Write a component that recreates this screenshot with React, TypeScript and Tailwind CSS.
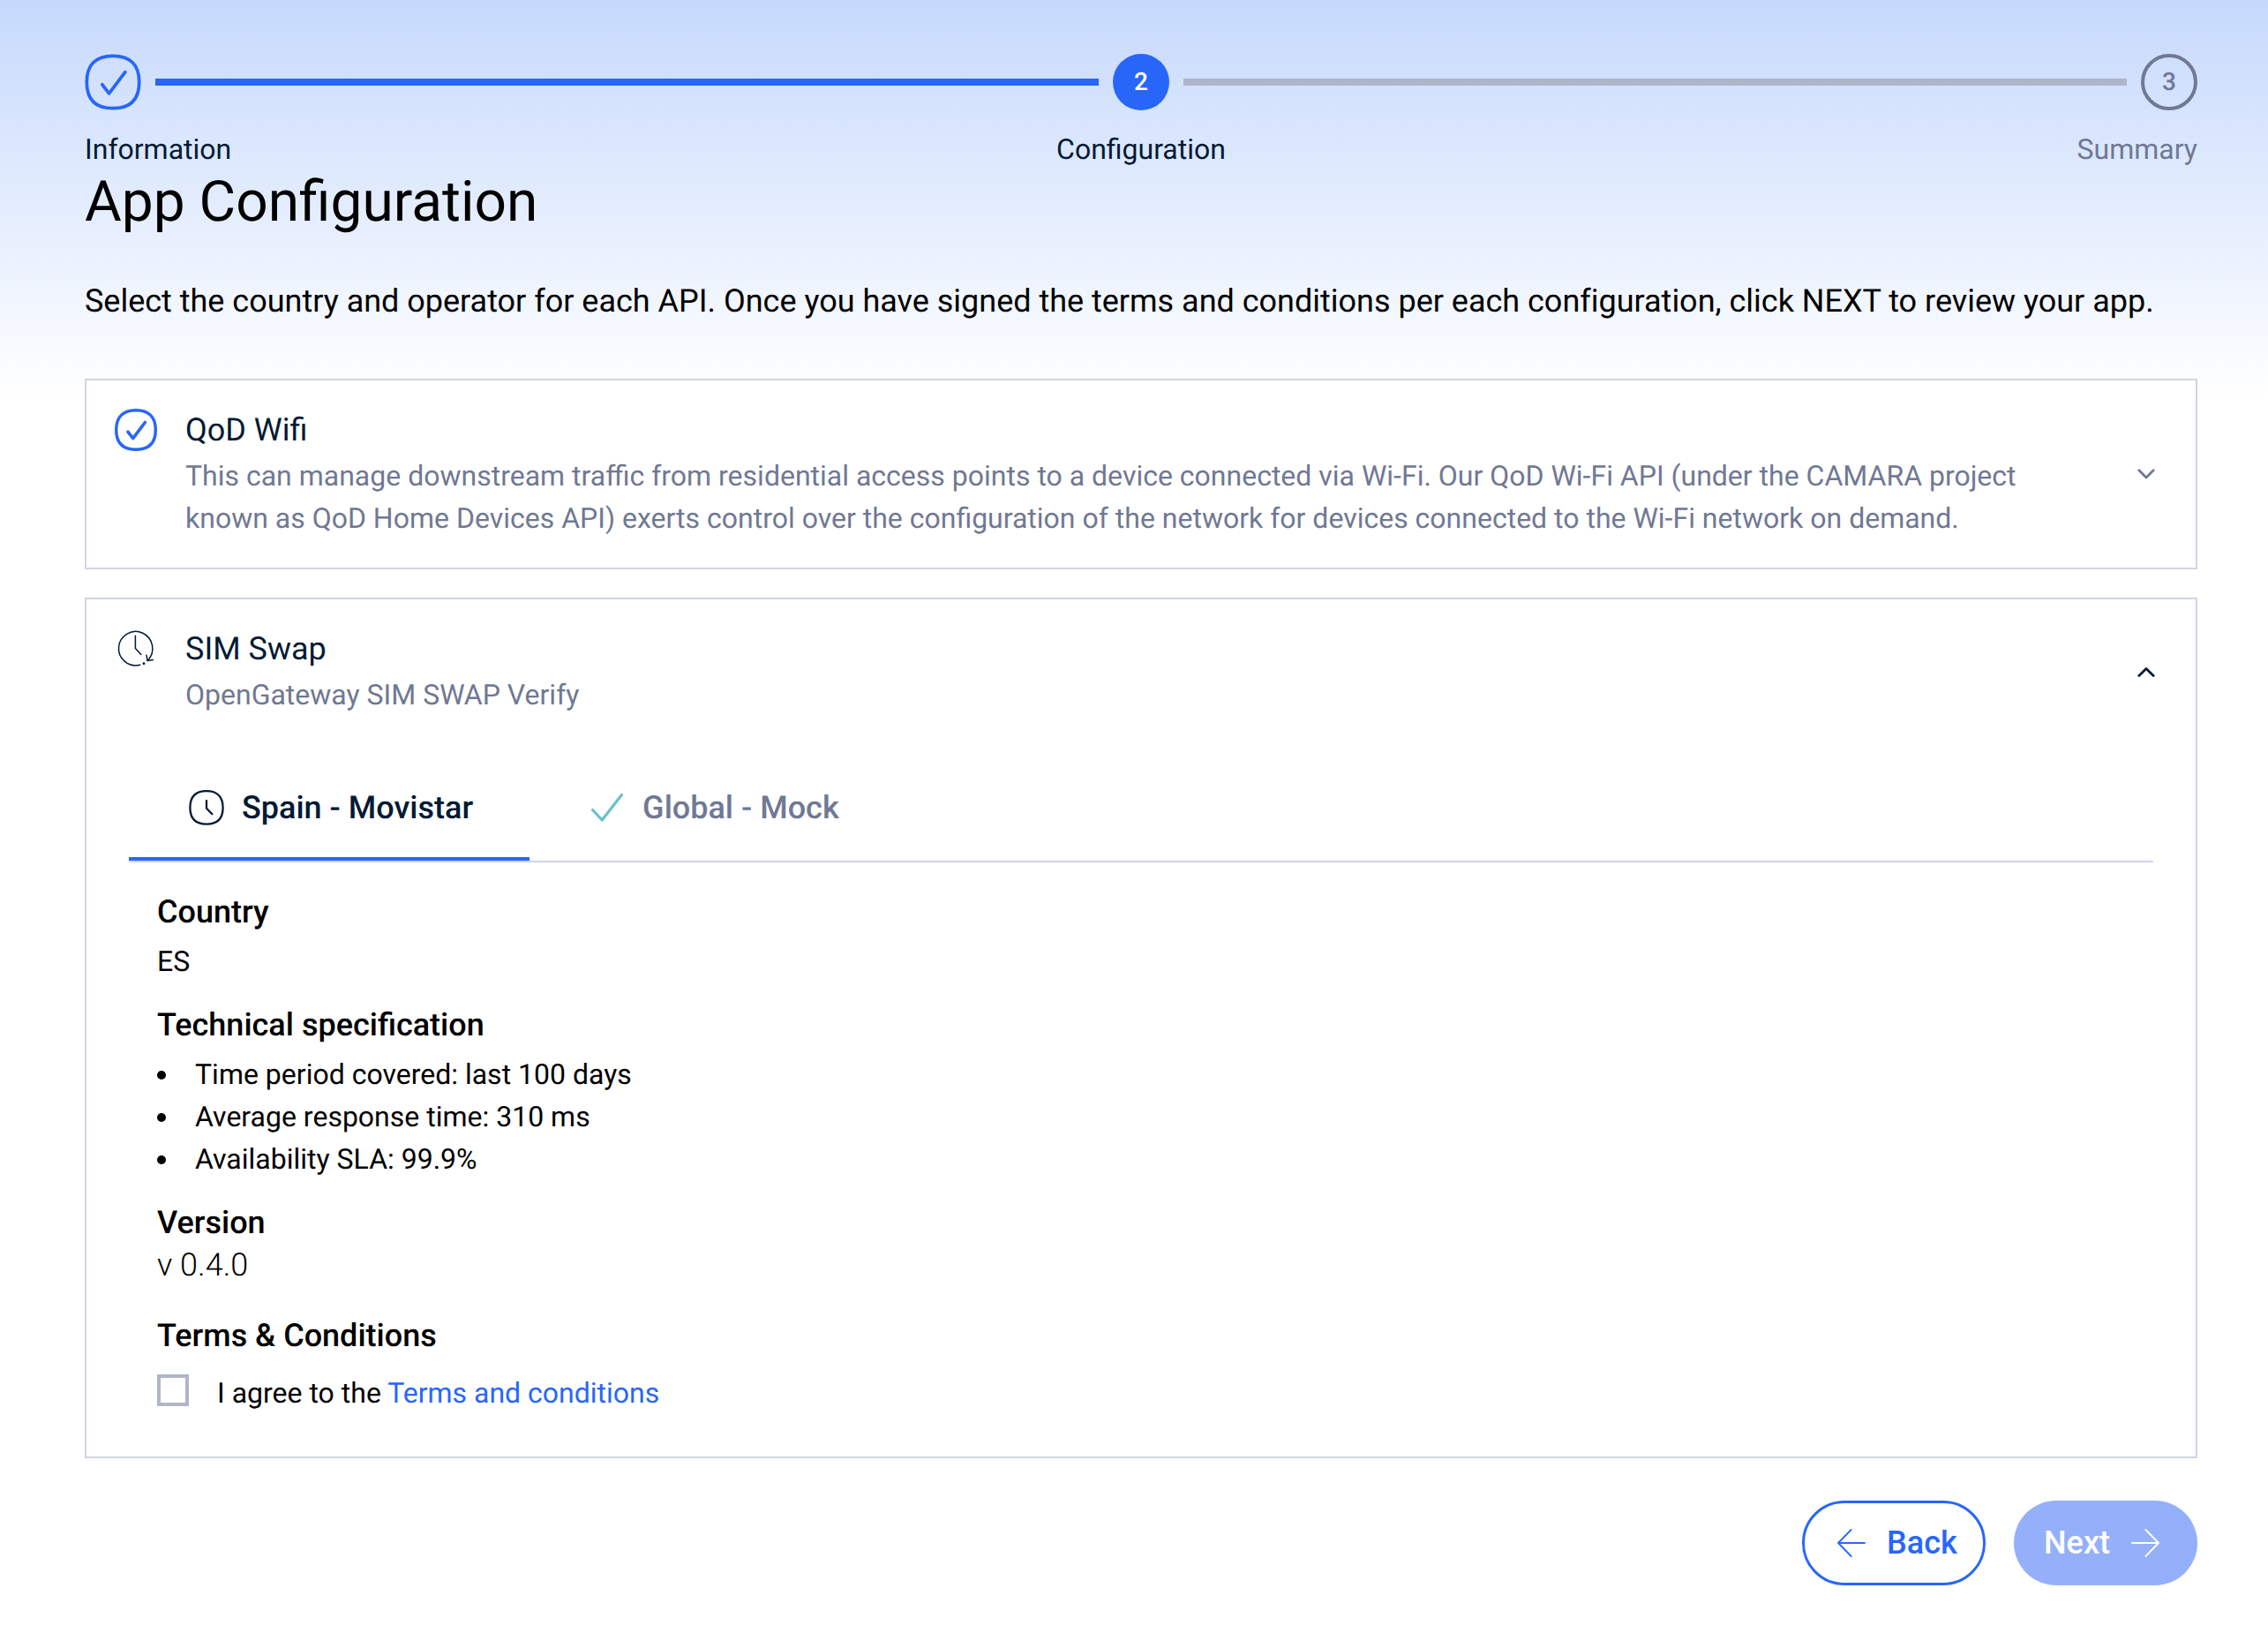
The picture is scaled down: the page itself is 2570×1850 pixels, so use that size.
import type { ReactNode } from "react";

function CheckBadge({ className, ring, tick }: { className: string; ring: number; tick: number }) {
  return (
    <svg viewBox="0 0 48 48" className={className} fill="none" stroke="currentColor" strokeLinecap="round" strokeLinejoin="round">
      <path d="M24 1.7C9.3 1.7 1.7 9.3 1.7 24S9.3 46.3 24 46.3 46.3 38.7 46.3 24 38.7 1.7 24 1.7Z" strokeWidth={ring} />
      <path d="M14.9 26.1 20.7 33.6 34.4 15.5" strokeWidth={tick} />
    </svg>
  );
}

function HistoryIcon() {
  return (
    <svg viewBox="0 0 48 48" className="size-12 shrink-0" fill="none" stroke="currentColor" strokeWidth="1.5" strokeLinecap="round" strokeLinejoin="round">
      <path d="M28.7 42.2A19.2 19.2 0 1 1 37.3 37.2" />
      <path d="M23.4 9.2V23.5L29.8 30.5" />
      <path d="M36 31.2 37.1 37.6 43.4 36.4" />
      <circle cx="33" cy="40.7" r="0.7" fill="currentColor" />
    </svg>
  );
}

function ClockIcon() {
  return (
    <svg viewBox="0 0 48 48" className="size-12 shrink-0" fill="none" stroke="currentColor" strokeWidth="2.3" strokeLinecap="round" strokeLinejoin="round">
      <path d="M24 5.2C11.7 5.2 5.4 11.6 5.4 24S11.7 42.6 24 42.6 42.6 36.3 42.6 24 36.3 5.2 24 5.2Z" />
      <path d="M24 16.2V24.7L30.4 31.2" />
    </svg>
  );
}

function TickIcon() {
  return (
    <svg viewBox="0 0 48 48" className="size-12 shrink-0 text-[#6bc1c8]" fill="none" stroke="currentColor" strokeWidth="3.2" strokeLinecap="round" strokeLinejoin="round">
      <path d="M7.5 26.5 18.2 38 40.5 9.5" />
    </svg>
  );
}

function Chevron({ up, className }: { up?: boolean; className: string }) {
  return (
    <svg viewBox="0 0 48 48" className={className} fill="none" stroke="currentColor" strokeWidth="2.8" strokeLinecap="round" strokeLinejoin="round">
      <path d={up ? "M15.8 28.6 24 20.4 32.2 28.6" : "M15.8 19.7 24 27.9 32.2 19.7"} />
    </svg>
  );
}

function Arrow({ left }: { left?: boolean }) {
  return (
    <svg viewBox="0 0 32 32" className="size-8 shrink-0" fill="none" stroke="currentColor" strokeWidth="1.8" strokeLinecap="round" strokeLinejoin="round">
      <path d={left ? "M31 16H1M15.6 1 1 16 15.6 31" : "M1 16H31M16.4 1 31 16 16.4 31"} />
    </svg>
  );
}

function CardHeader({ icon, title, text, chevron }: { icon: ReactNode; title: string; text: string; chevron: ReactNode }) {
  return (
    <div className="flex items-center">
      <div className="flex flex-1 items-start gap-8">
        {icon}
        <div className="max-w-[2140px]">
          <h2 className="mb-1 text-[36px] leading-12 text-[#031a34]">{title}</h2>
          <p className="text-[32px] leading-12 text-[#707894]">{text}</p>
        </div>
      </div>
      {chevron}
    </div>
  );
}

const specs = [
  "Time period covered: last 100 days",
  "Average response time: 310 ms",
  "Availability SLA: 99.9%",
];

export default function App() {
  return (
    <div className="min-h-[1850px] bg-white bg-[linear-gradient(180deg,#c6d9fc_0px,#ffffff_450px)] font-['Roboto',sans-serif] text-black [text-rendering:geometricPrecision]">
      <div className="flex flex-col pt-[61px] pr-20 pl-24">
        <div className="flex items-center gap-4">
          <CheckBadge ring={2.8} tick={2.8} className="size-16 shrink-0 text-[#2866fa]" />
          <div className="h-2 flex-1 bg-[#2866fa]" />
          <div className="flex size-16 items-center justify-center rounded-full bg-[#2866fa] text-[28px] font-medium text-white">2</div>
          <div className="h-2 flex-1 bg-[#b0b5c9]" />
          <div className="flex size-16 items-center justify-center rounded-full border-4 border-[#707894] text-[28px] font-medium text-[#707894]">3</div>
        </div>
        <div className="mt-5 grid grid-cols-3 text-[32px] leading-12 text-[#031a34]">
          <span>Information</span>
          <span className="text-center">Configuration</span>
          <span className="text-right text-[#707894]">Summary</span>
        </div>

        <h1 className="text-[64px] leading-[72px]">App Configuration</h1>
        <p className="mt-[52px] text-[36px] leading-12 tracking-[-0.01px] whitespace-nowrap">
          Select the country and operator for each API. Once you have signed the terms and conditions per each configuration, click NEXT to review your app.
        </p>

        <section className="mt-16 border-2 border-[#d1d5e4] bg-white p-8">
          <CardHeader
            icon={<CheckBadge ring={3.4} tick={3.6} className="size-12 shrink-0 text-[#2866fa]" />}
            title="QoD Wifi"
            text="This can manage downstream traffic from residential access points to a device connected via Wi-Fi. Our QoD Wi-Fi API (under the CAMARA project known as QoD Home Devices API) exerts control over the configuration of the network for devices connected to the Wi-Fi network on demand."
            chevron={<Chevron className="size-12 shrink-0 text-[#707894]" />}
          />
        </section>

        <section className="mt-8 border-2 border-[#d1d5e4] bg-white px-8 pt-8 pb-12">
          <CardHeader
            icon={<span className="text-[#031a34]"><HistoryIcon /></span>}
            title="SIM Swap"
            text="OpenGateway SIM SWAP Verify"
            chevron={<Chevron up className="size-12 shrink-0 text-[#031a34]" />}
          />

          <div className="mx-4 mt-11 flex border-b-2 border-[#d1d5e4] text-[36px] leading-12 font-medium">
            <div className="flex h-[120px] items-center gap-4 border-b-4 border-[#2866fa] px-16 pt-1 text-[#031a34]">
              <ClockIcon />
              Spain - Movistar
            </div>
            <div className="flex h-[120px] items-center gap-4 px-16 text-[#707894]">
              <TickIcon />
              Global - Mock
            </div>
          </div>

          <div className="px-12 pt-8 text-[32px] leading-12">
            <h3 className="mb-2 text-[36px] leading-12 font-medium">Country</h3>
            <p>ES</p>
            <h3 className="mt-6 mb-2 text-[36px] leading-12 font-medium">Technical specification</h3>
            <ul>
              {specs.map((s) => (
                <li key={s} className="flex items-center gap-[33px]">
                  <span className="mt-0.5 size-2.5 rounded-full bg-black" />
                  {s}
                </li>
              ))}
            </ul>
            <h3 className="mt-6 text-[36px] leading-12 font-medium">Version</h3>
            <p className="text-[36px] leading-12 font-light">v 0.4.0</p>
            <h3 className="mt-8 text-[36px] leading-12 font-medium">Terms &amp; Conditions</h3>
            <div className="mt-[17px] flex items-start gap-8">
              <span className="mt-[3px] size-9 border-4 border-[#b0b5c9]" />
              <p>
                I agree to the <a className="text-[#2866fa]">Terms and conditions</a>
              </p>
            </div>
          </div>
        </section>

        <div className="mt-12 flex justify-end gap-8 text-[36px] font-medium">
          <button className="flex h-24 w-52 items-center gap-6 rounded-full border-3 border-[#2866fa] bg-white pl-[37px] text-[#2866fa]">
            <Arrow left />
            Back
          </button>
          <button className="flex h-24 w-52 items-center justify-end gap-6 rounded-full bg-[#95b0fa] pr-[43px] text-white">
            Next
            <Arrow />
          </button>
        </div>
      </div>
    </div>
  );
}
